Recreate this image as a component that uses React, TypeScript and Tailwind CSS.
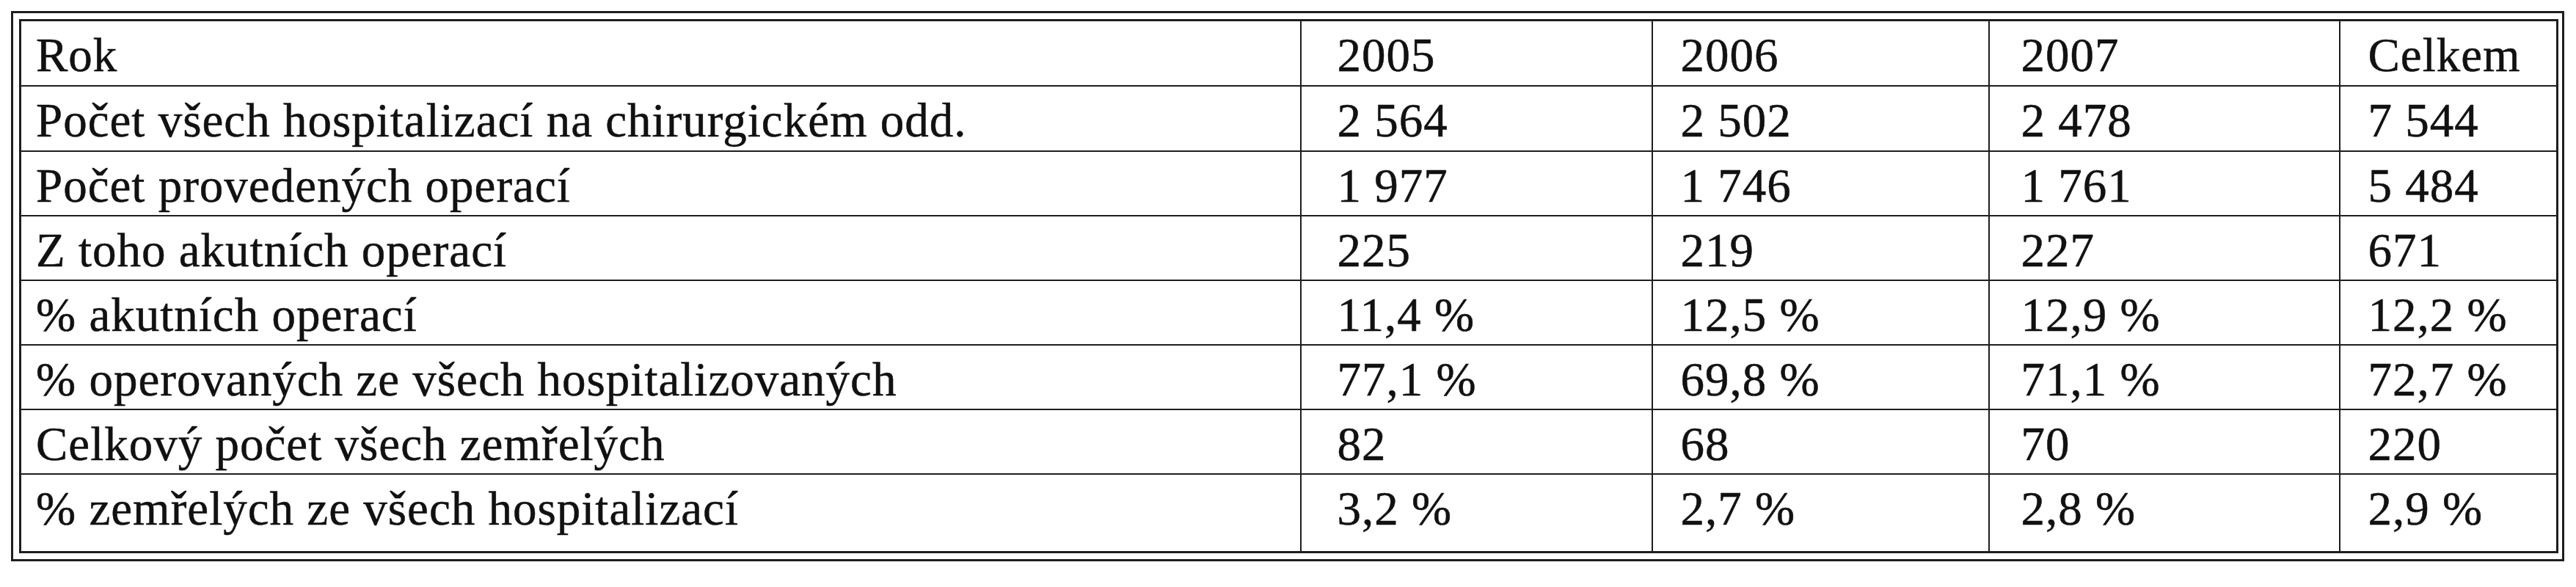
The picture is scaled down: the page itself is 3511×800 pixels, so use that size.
const rows: { label: string; values: string[]; tall?: boolean }[] = [
  { label: "Počet všech hospitalizací na chirurgickém odd.", values: ["2 564", "2 502", "2 478", "7 544"] },
  { label: "Počet provedených operací", values: ["1 977", "1 746", "1 761", "5 484"] },
  { label: "Z toho akutních operací", values: ["225", "219", "227", "671"] },
  { label: "% akutních operací", values: ["11,4 %", "12,5 %", "12,9 %", "12,2 %"] },
  { label: "% operovaných ze všech hospitalizovaných", values: ["77,1 %", "69,8 %", "71,1 %", "72,7 %"] },
  { label: "Celkový počet všech zemřelých", values: ["82", "68", "70", "220"] },
  { label: "% zemřelých ze všech hospitalizací", values: ["3,2 %", "2,7 %", "2,8 %", "2,9 %"], tall: true },
];

// scanned table: heavy serif text, 2px grid inside a doubled frame
const cell = "border-2 border-[#1e1e1e] align-top pt-[14px] leading-[65px]";

export default function App() {
  return (
    <div className="min-h-[800px] bg-white pt-[15px] pl-[15px] font-['Liberation_Serif','Times_New_Roman',serif] text-[65px] tracking-[1px] text-[#111] [-webkit-text-stroke:0.5px_#111]">
      <div className="w-[3480px] border-[3px] border-[#1e1e1e] p-[8px]">
        <table className="w-[3458px] table-fixed border-collapse border-[3px] border-[#1e1e1e]">
          <colgroup>
            <col className="w-[1745px]" />
            <col className="w-[479px]" />
            <col className="w-[459px]" />
            <col className="w-[478px]" />
            <col className="w-[297px]" />
          </colgroup>
          <tbody>
            <tr className="h-[89px]">
              <td className={`${cell} pl-[20px]`}>Rok</td>
              <td className={`${cell} pl-[49px]`}>2005</td>
              <td className={`${cell} pl-[38px]`}>2006</td>
              <td className={`${cell} pl-[43px]`}>2007</td>
              <td className={`${cell} pl-[38px]`}>Celkem</td>
            </tr>
            {rows.map((r, i) => (
              <tr key={r.label} className={r.tall ? "h-[107px]" : i === 0 ? "h-[89px]" : "h-[88px]"}>
                <td className={`${cell} pl-[20px]`}>{r.label}</td>
                <td className={`${cell} pl-[49px]`}>{r.values[0]}</td>
                <td className={`${cell} pl-[38px]`}>{r.values[1]}</td>
                <td className={`${cell} pl-[43px]`}>{r.values[2]}</td>
                <td className={`${cell} pl-[38px]`}>{r.values[3]}</td>
              </tr>
            ))}
          </tbody>
        </table>
      </div>
    </div>
  );
}
